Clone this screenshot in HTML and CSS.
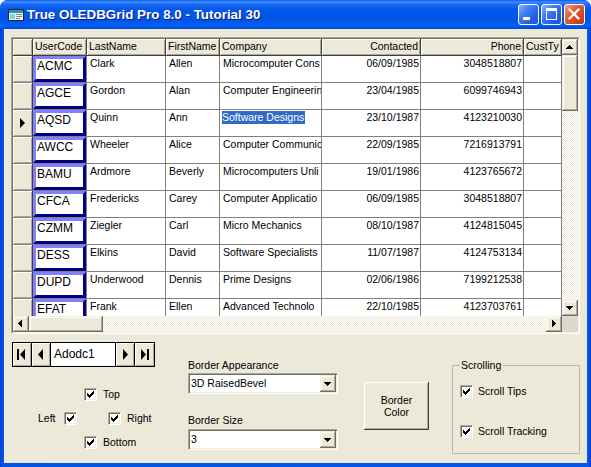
FILE: index.html
```html
<!DOCTYPE html>
<html>
<head>
<meta charset="utf-8">
<link rel="stylesheet" href="styles.css">
</head>
<body>
<div class="window">
  <div class="titlebar">
    <svg class="app-icon" width="16" height="16" viewBox="0 0 16 16">
      <rect x="0.5" y="2.5" width="15" height="11" fill="#F4F4F4" stroke="#202020"/>
      <rect x="1" y="3" width="14" height="3" fill="#1A9AB5"/>
      <rect x="2" y="7" width="5" height="5" fill="#7FD4E6"/>
      <rect x="8" y="7" width="6" height="1" fill="#888"/>
      <rect x="8" y="9" width="6" height="1" fill="#888"/>
      <rect x="8" y="11" width="4" height="1" fill="#888"/>
    </svg>
    <span class="title">True OLEDBGrid Pro 8.0 - Tutorial 30</span>
    <div class="tb-buttons">
      <div class="tb-btn blue"><svg width="21" height="21" viewBox="0 0 21 21"><rect x="5" y="13" width="7" height="3" fill="#fff"/></svg></div>
      <div class="tb-btn blue"><svg width="21" height="21" viewBox="0 0 21 21"><path d="M5 4h11v12H5z M6 7v8h9V7z" fill="#fff" fill-rule="evenodd"/></svg></div>
      <div class="tb-btn red"><svg width="21" height="21" viewBox="0 0 21 21"><path d="M5.5 5.5L14.5 14.5M14.5 5.5L5.5 14.5" stroke="#fff" stroke-width="2.2" stroke-linecap="square"/></svg></div>
    </div>
  </div>

  <div class="client">
    <div class="grid-frame"><div class="grid-inner">
      <div class="grid-top">
        <div class="grid-view">
          <div class="cells">
            <div class="h"></div><div class="h">UserCode</div><div class="h">LastName</div><div class="h">FirstName</div><div class="h">Company</div><div class="h r">Contacted</div><div class="h r">Phone</div><div class="h">CustTy</div>

            <div class="sel"></div><div class="c code"><span>ACMC</span></div><div class="c">Clark</div><div class="c">Allen</div><div class="c">Microcomputer Cons</div><div class="c r">06/09/1985</div><div class="c r">3048518807</div><div class="c"></div>
            <div class="sel"></div><div class="c code"><span>AGCE</span></div><div class="c">Gordon</div><div class="c">Alan</div><div class="c">Computer Engineerin</div><div class="c r">23/04/1985</div><div class="c r">6099746943</div><div class="c"></div>
            <div class="sel cur"><svg width="6" height="10" viewBox="0 0 6 10"><path d="M0 0L5 5L0 10z" fill="#000"/></svg></div><div class="c code"><span>AQSD</span></div><div class="c">Quinn</div><div class="c">Ann</div><div class="c"><span class="hl">Software Designs</span></div><div class="c r">23/10/1987</div><div class="c r">4123210030</div><div class="c"></div>
            <div class="sel"></div><div class="c code"><span>AWCC</span></div><div class="c">Wheeler</div><div class="c">Alice</div><div class="c">Computer Communic</div><div class="c r">22/09/1985</div><div class="c r">7216913791</div><div class="c"></div>
            <div class="sel"></div><div class="c code"><span>BAMU</span></div><div class="c">Ardmore</div><div class="c">Beverly</div><div class="c">Microcomputers Unli</div><div class="c r">19/01/1986</div><div class="c r">4123765672</div><div class="c"></div>
            <div class="sel"></div><div class="c code"><span>CFCA</span></div><div class="c">Fredericks</div><div class="c">Carey</div><div class="c">Computer Applicatio</div><div class="c r">06/09/1985</div><div class="c r">3048518807</div><div class="c"></div>
            <div class="sel"></div><div class="c code"><span>CZMM</span></div><div class="c">Ziegler</div><div class="c">Carl</div><div class="c">Micro Mechanics</div><div class="c r">08/10/1987</div><div class="c r">4124815045</div><div class="c"></div>
            <div class="sel"></div><div class="c code"><span>DESS</span></div><div class="c">Elkins</div><div class="c">David</div><div class="c">Software Specialists</div><div class="c r">11/07/1987</div><div class="c r">4124753134</div><div class="c"></div>
            <div class="sel"></div><div class="c code"><span>DUPD</span></div><div class="c">Underwood</div><div class="c">Dennis</div><div class="c">Prime Designs</div><div class="c r">02/06/1986</div><div class="c r">7199212538</div><div class="c"></div>
            <div class="sel"></div><div class="c code"><span>EFAT</span></div><div class="c">Frank</div><div class="c">Ellen</div><div class="c">Advanced Technolo</div><div class="c r">22/10/1985</div><div class="c r">4123703761</div><div class="c"></div>
          </div>
        </div>
        <div class="vscroll">
          <div class="sbtn"><svg width="14" height="14" viewBox="1 1 14 14"><path d="M7 6h1v1h1v1h1v1h1v1H4V9h1V8h1V7h1z" fill="#000"/></svg></div>
          <div class="thumb vthumb"></div>
          <div class="track"></div>
          <div class="sbtn"><svg width="14" height="14" viewBox="1 1 14 14"><path d="M4 6h7v1h-1v1h-1v1h-1v1H7V9H6V8H5V7H4z" fill="#000"/></svg></div>
        </div>
      </div>
      <div class="grid-bottom">
        <div class="hscroll">
          <div class="sbtn"><svg width="14" height="14" viewBox="1 1 14 14"><path d="M5 7h1V6h1V5h1V4h1v7H8v-1H7V9H6V8H5z" fill="#000"/></svg></div>
          <div class="thumb hthumb"></div>
          <div class="track"></div>
          <div class="sbtn"><svg width="14" height="14" viewBox="1 1 14 14"><path d="M6 4h1v1h1v1h1v1h1v1H9v1H8v1H7v1H6z" fill="#000"/></svg></div>
        </div>
        <div class="corner"></div>
      </div>
    </div></div>

    <div class="controls">
      <div class="col-left">
        <div class="adodc">
          <div class="abtn"><svg width="18" height="23" viewBox="0 0 18 23"><rect x="4" y="6" width="2" height="11" fill="#000"/><path d="M7 11.5L12 6V17z" fill="#000"/></svg></div>
          <div class="abtn"><svg width="18" height="23" viewBox="0 0 18 23"><path d="M6 11.5L11 6V17z" fill="#000"/></svg></div>
          <div class="atext">Adodc1</div>
          <div class="abtn"><svg width="18" height="23" viewBox="0 0 18 23"><path d="M7 6L12 11.5L7 17z" fill="#000"/></svg></div>
          <div class="abtn last"><svg width="18" height="23" viewBox="0 0 18 23"><path d="M5 6L10 11.5L5 17z" fill="#000"/><rect x="11" y="6" width="2" height="11" fill="#000"/></svg></div>
        </div>
        <div class="cross">
          <div class="crow mid-row">
            <span class="cb"><svg width="11" height="11" viewBox="0 0 11 11"><path d="M2 4h1v3h-1z M3 5h1v3h-1z M4 6h1v3h-1z M5 5h1v3h-1z M6 4h1v3h-1z M7 3h1v3h-1z M8 2h1v3h-1z" fill="#000"/></svg></span>
            <span class="lbl">Top</span>
          </div>
          <div class="crow lr-row">
            <span class="lbl left">Left</span>
            <span class="cb"><svg width="11" height="11" viewBox="0 0 11 11"><path d="M2 4h1v3h-1z M3 5h1v3h-1z M4 6h1v3h-1z M5 5h1v3h-1z M6 4h1v3h-1z M7 3h1v3h-1z M8 2h1v3h-1z" fill="#000"/></svg></span>
            <span class="cb right-cb"><svg width="11" height="11" viewBox="0 0 11 11"><path d="M2 4h1v3h-1z M3 5h1v3h-1z M4 6h1v3h-1z M5 5h1v3h-1z M6 4h1v3h-1z M7 3h1v3h-1z M8 2h1v3h-1z" fill="#000"/></svg></span>
            <span class="lbl">Right</span>
          </div>
          <div class="crow mid-row">
            <span class="cb"><svg width="11" height="11" viewBox="0 0 11 11"><path d="M2 4h1v3h-1z M3 5h1v3h-1z M4 6h1v3h-1z M5 5h1v3h-1z M6 4h1v3h-1z M7 3h1v3h-1z M8 2h1v3h-1z" fill="#000"/></svg></span>
            <span class="lbl">Bottom</span>
          </div>
        </div>
      </div>

      <div class="col-combos">
        <div class="clabel first">Border Appearance</div>
        <div class="combo"><span class="ctext">3D RaisedBevel</span><span class="cbtn"><svg width="16" height="17" viewBox="0 0 16 17"><path d="M4 7h7v1h-1v1h-1v1h-1v1H7v-1H6V9H5V8H4z" fill="#000"/></svg></span></div>
        <div class="clabel second">Border Size</div>
        <div class="combo combo2"><span class="ctext">3</span><span class="cbtn"><svg width="16" height="17" viewBox="0 0 16 17"><path d="M4 7h7v1h-1v1h-1v1h-1v1H7v-1H6V9H5V8H4z" fill="#000"/></svg></span></div>
      </div>

      <div class="bcolor">Border<br>Color</div>

      <fieldset class="scrolling">
        <legend>Scrolling</legend>
        <div class="frow first">
          <span class="cb"><svg width="11" height="11" viewBox="0 0 11 11"><path d="M2 4h1v3h-1z M3 5h1v3h-1z M4 6h1v3h-1z M5 5h1v3h-1z M6 4h1v3h-1z M7 3h1v3h-1z M8 2h1v3h-1z" fill="#000"/></svg></span>
          <span class="lbl">Scroll Tips</span>
        </div>
        <div class="frow second">
          <span class="cb"><svg width="11" height="11" viewBox="0 0 11 11"><path d="M2 4h1v3h-1z M3 5h1v3h-1z M4 6h1v3h-1z M5 5h1v3h-1z M6 4h1v3h-1z M7 3h1v3h-1z M8 2h1v3h-1z" fill="#000"/></svg></span>
          <span class="lbl">Scroll Tracking</span>
        </div>
      </fieldset>
    </div>
  </div>
</div>
</body>
</html>
```

FILE: styles.css
```css
* { box-sizing: border-box; }
html, body { margin: 0; padding: 0; }
body {
  width: 591px; height: 467px; overflow: hidden;
  background: #fff;
  font-family: "Liberation Sans", Arial, sans-serif;
  font-size: 10.5px;
  color: #000;
}
.window {
  width: 591px; height: 467px;
  display: flex; flex-direction: column;
  background: linear-gradient(90deg, #0831D9 0, #0054E3 2px, #0058EE calc(100% - 2px), #0831D9 100%);
  border-radius: 8px 8px 0 0;
  overflow: hidden;
}
.titlebar {
  height: 29px; flex: none;
  display: flex; align-items: center;
  padding-left: 8px;
  background: linear-gradient(180deg, #0A5AE8 0%, #3D8DFF 7%, #1A68F2 15%, #0057EA 35%, #0055E5 70%, #0060F8 88%, #0049D0 100%);
}
.app-icon { flex: none; margin-right: 3px; }
.title {
  color: #fff; font-weight: bold; font-size: 13.4px;
  text-shadow: 1px 1px 0 #0A1A8C;
  white-space: nowrap;
  font-family: "Liberation Sans", Arial, sans-serif;
}
.tb-buttons { margin-left: auto; margin-right: 6px; display: flex; gap: 2px; }
.tb-btn {
  width: 21px; height: 21px; border: 1px solid #fff; border-radius: 3px;
  display: flex; align-items: center; justify-content: center;
  overflow: hidden;
}
.tb-btn svg { flex: none; }
.tb-btn.blue { background: linear-gradient(135deg, #8AB4FF 0%, #3E7CF8 35%, #2A5FE4 70%, #1F50D4 100%); }
.tb-btn.red { background: linear-gradient(135deg, #F4A285 0%, #E5633A 35%, #D5461C 70%, #C03610 100%); }

.client {
  flex: 1;
  margin: 0 4px 4px;
  background: #ECE9D8;
  padding: 8px 0 0 7px;
}

.grid-frame {
  width: 569px;
  border: 1px solid; border-color: #ACA899 #fff #fff #ACA899;
}
.grid-inner {
  border: 1px solid; border-color: #716F64 #F1EFE2 #F1EFE2 #716F64;
  background: #fff;
}
.grid-top { display: flex; }
.grid-view { width: 549px; height: 277px; overflow: hidden; background: #fff; }
.cells {
  display: grid;
  grid-template-columns: 20px 54px 79px 54px 102px 99px 103px 38px;
  grid-template-rows: 17px;
  grid-auto-rows: 27px;
}
.h {
  background: #ECE9D8;
  border-right: 1px solid #404040; border-bottom: 1px solid #404040;
  box-shadow: inset 1px 1px 0 #fff, inset -1px -1px 0 #ACA899;
  padding: 0 2px 0 2px;
  line-height: 15px;
  white-space: nowrap; overflow: hidden;
}
.sel {
  background: #ECE9D8;
  border-right: 1px solid #404040; border-bottom: 1px solid #808080;
  box-shadow: inset 1px 1px 0 #fff, inset -1px -1px 0 #ACA899;
}
.sel.cur { display: flex; align-items: center; justify-content: center; }
.c {
  border-right: 1px solid #808080; border-bottom: 1px solid #808080;
  padding: 1px 2px 0 3px;
  line-height: 13px;
  white-space: nowrap; overflow: hidden;
  background: #fff;
}
.r { text-align: right; }
.h.r { padding-right: 2px; }
.c.r { padding-right: 1px; }
.c.code { padding: 0; }
.c.code span {
  display: block; height: 100%;
  border: 3px solid; border-color: #8080FF #000080 #000080 #8080FF;
  background: #fff;
  font-size: 12px; line-height: 15px;
  padding: 0 0 0 1px;
}
.hl { background: #316AC5; color: #fff; padding: 0 1px 0 0; margin-left: -1px; display: inline-block; line-height: 13px; }

.sbtn, .thumb {
  background: #ECE9D8;
  box-shadow: inset -1px -1px 0 #716F64, inset 1px 1px 0 #F1EFE2, inset -2px -2px 0 #ACA899, inset 2px 2px 0 #fff;
  flex: none;
}
.sbtn { width: 16px; height: 16px; display: flex; align-items: center; justify-content: center; }
.track {
  flex: 1;
  background: repeating-conic-gradient(#ECE9D8 0 25%, #fff 0 50%) 0 0 / 2px 2px;
}
.vscroll { width: 16px; height: 277px; display: flex; flex-direction: column; }
.vthumb { width: 16px; height: 56px; }
.grid-bottom { display: flex; }
.hscroll { width: 549px; height: 16px; display: flex; }
.hthumb { width: 74px; height: 16px; }
.corner { width: 16px; height: 16px; background: #DCD9CC; }

.controls { display: flex; align-items: flex-start; margin-left: 1px; }
.col-left { width: 176px; flex: none; }
.adodc {
  margin-top: 8px;
  width: 143px; height: 25px;
  display: flex;
  border: 1px solid #000;
  background: #fff;
}
.abtn {
  width: 19px; flex: none;
  background: #ECE9D8;
  border-right: 1px solid #000;
  box-shadow: inset 1px 1px 0 #fff, inset -1px -1px 0 #ACA899;
  display: flex; align-items: center; justify-content: center;
}
.abtn.last { border-right: 0; width: 19px; }
.atext {
  flex: 1; background: #fff;
  border-right: 1px solid #000;
  font-size: 12px; line-height: 23px;
  padding-left: 3px;
}
.cross { margin-top: 21px; display: flex; flex-direction: column; gap: 11px; }
.crow { display: flex; align-items: center; height: 13px; }
.mid-row { padding-left: 72px; }
.lr-row { padding-left: 26px; }
.lbl { line-height: 13px; white-space: nowrap; margin-left: 6px; }
.lbl.left { width: 26px; margin-left: 0; }
.cb {
  width: 13px; height: 13px; flex: none;
  border: 1px solid; border-color: #ACA899 #fff #fff #ACA899;
  box-shadow: inset 1px 1px 0 #716F64, inset -1px -1px 0 #F1EFE2;
  background: #fff;
  display: block;
}
.cb svg { display: block; }
.right-cb { margin-left: 31px; }

.col-combos { width: 150px; flex: none; }
.clabel { line-height: 13px; white-space: nowrap; }
.clabel.first { margin-top: 25px; }
.clabel.second { margin-top: 20px; }
.combo {
  margin-top: 1px;
  width: 150px; height: 21px;
  border: 1px solid; border-color: #ACA899 #fff #fff #ACA899;
  box-shadow: inset 1px 1px 0 #716F64, inset -1px -1px 0 #F1EFE2;
  background: #fff;
  display: flex; align-items: stretch;
  padding: 1px;
}
.combo2 { margin-top: 2px; }
.ctext { flex: 1; line-height: 17px; padding-left: 1px; white-space: nowrap; }
.cbtn {
  width: 16px; flex: none;
  background: #ECE9D8;
  box-shadow: inset -1px -1px 0 #716F64, inset 1px 1px 0 #F1EFE2, inset -2px -2px 0 #ACA899, inset 2px 2px 0 #fff;
  display: flex; align-items: center; justify-content: center;
}

.bcolor {
  margin-left: 26px; margin-top: 48px;
  width: 65px; height: 48px; flex: none;
  background: #ECE9D8;
  box-shadow: inset -1px -1px 0 #404040, inset 1px 1px 0 #fff, inset -2px -2px 0 #ACA899, inset 2px 2px 0 #F1EFE2;
  display: flex; align-items: center; justify-content: center;
  text-align: center;
  line-height: 12px;
  padding-bottom: 1px;
}

.scrolling {
  margin: 25px 0 0 23px;
  width: 128px; flex: none;
  border: 1px solid #B8B6A8;
  border-radius: 1px;
  padding: 0 7px 15px 7px;
  min-width: 0;
}
.scrolling legend {
  padding: 0 2px 0 1px;
  margin-left: 0;
  line-height: 13px;
  font-size: 10.5px;
}
.frow { display: flex; align-items: center; height: 13px; }
.frow .lbl { margin-left: 5px; }
.frow.first { margin-top: 13px; }
.frow.second { margin-top: 27px; }
```
